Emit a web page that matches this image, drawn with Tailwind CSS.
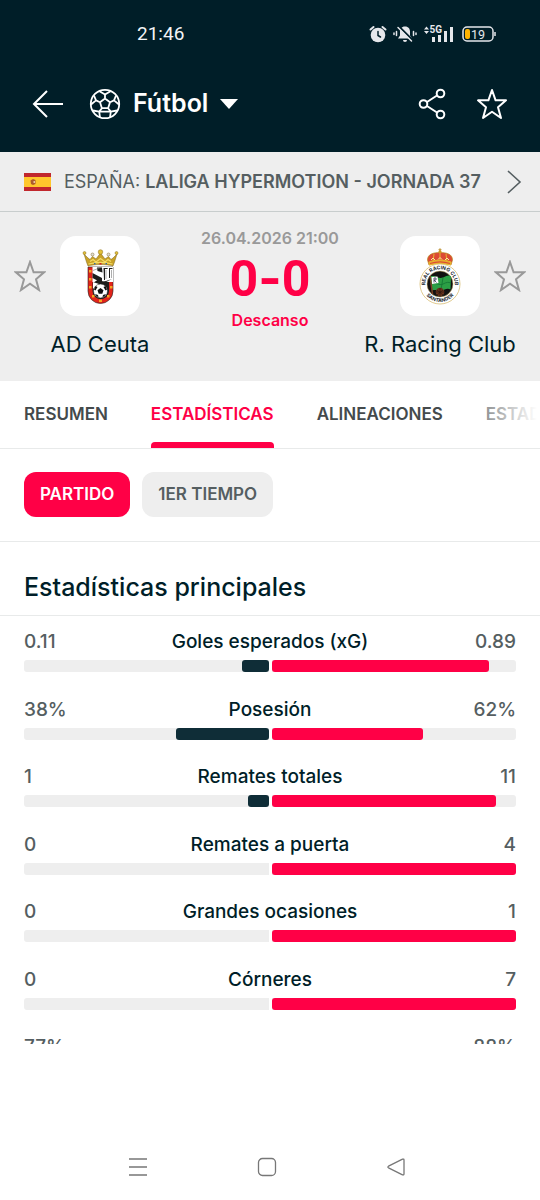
<!DOCTYPE html>
<html lang="es">
<head>
	<meta charset="utf-8">
	<meta name="viewport" content="width=device-width, initial-scale=1">
	<script src="https://cdn.jsdelivr.net/npm/@tailwindcss/browser@4"></script>
	<title>AD Ceuta - R. Racing Club</title>
</head>
<body class="h-screen flex flex-col overflow-hidden bg-white text-[#001e28] font-['Inter',sans-serif]">

	<header class="shrink-0 bg-[#001e28] text-white">
		<!-- Barra de estado -->
		<div class="h-14 pt-3 pl-[137px] pr-11 flex items-center justify-between font-['Roboto',sans-serif]">
			<span class="text-[19px] leading-6 text-gray-100">21:46</span>
			<div class="flex items-center gap-1.5 text-gray-200">
				<svg class="w-[18px] h-[18px]" viewBox="0 0 18 18" fill="none" stroke="currentColor" stroke-width="2" stroke-linecap="round"><circle cx="9" cy="10" r="7.300" fill="currentColor" stroke="none"/><path d="M1.500 4.500 4.500 2M16.500 4.500 13.500 2"/><path d="M9 6.500v4l2.500 1.500" stroke="#001e28" stroke-width="1.500"/></svg>
				<svg class="w-6 h-[18px]" viewBox="0 0 24 18" fill="none" stroke="currentColor" stroke-width="1.500" stroke-linecap="round"><path d="M12 1.500c-3.500 0-5 2.500-5 5v4L5 13.500h14l-2-3v-4c0-2.500-1.500-5-5-5zM10 15h4a2 2 0 0 1-4 0z" fill="currentColor" stroke="none"/><path d="M3.500 6.500v4M1 8v1.500M20.500 6.500v4M23 8v1.500"/><path d="M6 1.500 19.500 15" stroke="#001e28" stroke-width="2"/><path d="M5 2.500 18.500 16"/></svg>
				<svg class="w-[31px] h-[18px]" viewBox="0 0 31 18" fill="currentColor"><path d="M1 4.500 3.500 1.500 6 4.500zM1 6h5L3.500 9z"/><text x="6.500" y="8" font-size="10" font-weight="700">5G</text><rect x="9" y="12" width="3" height="5"/><rect x="15" y="10" width="3" height="7"/><rect x="21" y="6" width="3" height="11"/><rect x="27" y="2" width="3" height="15"/></svg>
				<svg class="ml-0.5 w-[34px] h-4" viewBox="0 0 34 16"><rect x="1" y="1" width="30" height="14" rx="4" fill="none" stroke="currentColor" stroke-width="1.500"/><path d="M33 6v4" stroke="currentColor" stroke-width="1.500"/><rect x="3" y="3" width="5" height="10" rx="2" fill="#ffb400"/><text x="9" y="12.500" font-size="12.500" fill="currentColor">19</text></svg>
			</div>
		</div>
		<!-- Cabecera -->
		<div class="h-24 px-8 flex items-center justify-between">
			<div class="flex items-center">
				<button type="button" aria-label="Volver">
					<svg class="w-8 h-8" viewBox="0 0 32 32" fill="none" stroke="currentColor" stroke-width="2"><path d="M31 16H2M15 3 2 16l13 13"/></svg>
				</button>
				<svg class="ml-6 w-[34px] h-[34px]" viewBox="0 0 34 34" fill="none" stroke="currentColor" stroke-width="1.800" stroke-linejoin="round"><circle cx="17" cy="17" r="14.200"/><path d="m17 11.500 5 3.700-1.900 6h-6.200l-1.900-6zM17 11.500V7.500M22 15.200l4-1.800M20.100 21.200l2.700 3.400M13.900 21.200l-2.700 3.400M12 15.200l-4-1.800M11.500 4.200 17 7.500l5.500-3.300M28 8.500l-2 4.900 5 4.100M29 23.500l-6.200 1.100L22 30.500M12 30.500l-.8-5.900L5 23.500M3 17.500l5-4.100-2-4.900M11.200 24.600h11.600"/></svg>
				<button type="button" class="ml-[11px] flex items-center gap-3 text-[25px] font-semibold">
					Fútbol
					<svg class="w-[18px] h-[10px]" viewBox="0 0 18 10"><path d="M0 0h18L9 10z" fill="currentColor"/></svg>
				</button>
			</div>
			<div class="flex items-center gap-7">
				<button type="button" aria-label="Compartir">
					<svg class="w-8 h-8" viewBox="0 0 32 32" fill="none" stroke="currentColor" stroke-width="2"><circle cx="24.500" cy="5.500" r="3.800"/><circle cx="7.500" cy="16" r="3.800"/><circle cx="24.500" cy="26.500" r="3.800"/><path d="m11 14 10-6.500M11 18l10 6.500"/></svg>
				</button>
				<button type="button" aria-label="Favorito">
					<svg class="w-8 h-8" viewBox="0 0 32 32" fill="none" stroke="currentColor" stroke-width="2" stroke-linejoin="round"><path d="m16 2 3.600 10.300H30l-8 7 3 10.700-9-6.300L7 30l3-10.700-8-7h10.400z"/></svg>
				</button>
			</div>
		</div>
	</header>

	<main class="flex-1 min-h-0 overflow-hidden">
		<a href="#" class="h-[60px] pl-6 pr-[18px] flex items-center bg-[#eeeeee] border-b border-[#c8cdcd] text-[#555e61]">
			<svg class="shrink-0 w-[27px] h-[18px]" viewBox="0 0 27 18"><path fill="#c1272d" d="M0 0h27v18H0z"/><path fill="#ffc72c" d="M0 4h27v10H0z"/><path fill="#ad5a2b" d="M6.500 7.500 9 6l2.500 1v4L9 12 7 11z"/><path fill="#e8c3a3" d="M9.500 8h1.500v2H9.500z"/></svg>
			<span class="ml-[13px] text-lg whitespace-nowrap">ESPAÑA: <b class="font-semibold">LALIGA HYPERMOTION - JORNADA 37</b></span>
			<svg class="ml-auto shrink-0 w-4 h-[26px]" viewBox="0 0 16 26" fill="none" stroke="currentColor" stroke-width="1.600"><path d="m2 2 12 11L2 24"/></svg>
		</a>

		<section class="grid grid-cols-[minmax(0,10fr)_minmax(0,7fr)_minmax(0,10fr)] pb-[23px] bg-[#eeeeee]">
			<div class="pt-6">
				<div class="grid grid-cols-[1fr_80px_1fr] items-center justify-items-center">
					<button type="button" aria-label="Seguir a AD Ceuta" class="text-[#999999]">
						<svg class="w-8 h-8" viewBox="0 0 32 32" fill="none" stroke="currentColor" stroke-width="2"><path d="m16 2 3.600 10.300H30l-8 7 3 10.700-9-6.300L7 30l3-10.700-8-7h10.400z"/></svg>
					</button>
					<div class="w-20 h-20 rounded-2xl bg-white">
						<svg class="w-20 h-20" viewBox="0 0 80 80">
							<path d="M28 31h25v24a12.500 12.500 0 0 1-25 0z" fill="#e2231a" stroke="#222" stroke-width=".6"/>
							<path d="M32.500 31H53v15H32.500z" fill="#fff"/>
							<path d="M32.500 37 42 42v5l-9.500-5zM37 31.500h5l.5 5-5-1.500zM43.500 32h4l.3 1H45v11h-1zM49 32h3.500v1H50v9h-1zM33 47l6-4 4 3 9-3-10 5z" fill="#1d1d1b"/>
							<path d="M33 34.500 42 31M46 34v9M51.500 34v8" stroke="#777" stroke-width=".6"/>
							<path d="M32.500 46.500 40 45l9 1v9a8.200 8.200 0 0 1-16.500 0z" fill="#1d1d1b"/>
							<path d="m33 46 6 2-6 5z" fill="#fff"/>
							<circle cx="40.500" cy="55" r="7" fill="#fff" stroke="#222" stroke-width=".5"/>
							<path d="m40.500 52 3 2.300-1.200 3.500h-3.600l-1.200-3.500zM35.500 50l2 1-2 3.500-1.500-1zM45.500 50l-2 1 2 3.500 1.500-1zM35 58l3 1 .5 2.300-2-1zM46 58l-3 1-.5 2.300 2-1z" fill="#111"/>
							<path d="M29 34h2.500v2.500H29zM29 42h2.500v2.500H29zM29 50h2.500v2.500H29zM32 59h2.500v2.500H32zM39 63.500h3V66h-3zM47 59h2.500v2.500H47zM50 50h2.500v2.500H50z" fill="#f5a623"/>
							<path d="m28 30-1.500-4L24 18l4 4 2 1.500 2.500-3 3.500 2.500 4.500-6 4.500 6 3.500-2.500 2.500 3 2-1.500 4-4-2.500 8-1.500 4c-7-2-18-2-25 0z" fill="#c9a227" stroke="#7c6115" stroke-width=".5"/>
							<path d="M28.500 28c7-2 17-2 24 0M30 25.500l3-2 3 2.500 4.500-3.500 4.500 3.500 3-2.500 3 2" fill="none" stroke="#f4dc67" stroke-width="1.200"/>
							<g fill="#e1bf36" stroke="#8b6d18" stroke-width=".5"><circle cx="24.500" cy="17" r="1.500"/><circle cx="32.500" cy="18.500" r="1.500" fill="#ddd"/><circle cx="40.500" cy="16" r="2.300"/><circle cx="48.500" cy="18.500" r="1.500" fill="#ddd"/><circle cx="56.500" cy="17" r="1.500"/></g>
							<path d="M39.500 27h2v1.500h-2z" fill="#d1232a"/><path d="M34 27h1.500v1.200H34zM45.500 27H47v1.200h-1.500z" fill="#2c6da5"/>
						</svg>
					</div>
				</div>
				<h2 class="mt-3.5 text-center text-[22px] leading-7">AD Ceuta</h2>
			</div>
			<div class="pt-4 flex flex-col items-center whitespace-nowrap">
				<time class="text-base leading-5 font-semibold text-[#999999]">26.04.2026 21:00</time>
				<p class="mt-2.5 text-[50px] leading-10 font-bold text-[#ff0046] font-['Roboto',sans-serif]">0<span class="font-['Inter',sans-serif]">-</span>0</p>
				<p class="mt-[11px] text-base leading-5 font-semibold text-[#ff0046]">Descanso</p>
			</div>
			<div class="pt-6">
				<div class="grid grid-cols-[1fr_80px_1fr] items-center justify-items-center">
					<div class="col-start-2 w-20 h-20 rounded-2xl bg-white">
						<svg class="w-20 h-20" viewBox="0 0 80 80">
							<path d="M29 29 27.500 24c0-6 6-7.500 12.500-7.500S52.500 18 52.500 24L51 29c-7-2-15-2-22 0z" fill="#dc4a35" stroke="#b78b20" stroke-width=".7"/>
							<path d="M29 26c7-2.500 15-2.500 22 0l-.5 3c-7-2-14-2-21 0zM40 17v9M34 18l-1 8M46 18l1 8" fill="#e8b52d" stroke="#e8b52d" stroke-width="1"/>
							<path d="M30 27.500c6-2 14-2 20 0" fill="none" stroke="#dc4a35" stroke-width="1.200"/>
							<path d="m31 24 2-2 2 2M38 23.500l2-2 2 2M45 24l2-2 2 2" fill="none" stroke="#fbe6a0"/>
							<circle cx="40" cy="15.500" r="1.500" fill="#d59b24"/><path d="M40 12v4M38.500 13.500h3" stroke="#b98a22" stroke-width=".7"/>
							<circle cx="40" cy="48" r="20" fill="#fff" stroke="#d8bd72" stroke-width=".8"/>
							<circle cx="40" cy="48" r="13" fill="#111" stroke="#d8bd72" stroke-width=".5"/>
							<path id="arcTop" d="M26.200 53.500a14.800 14.800 0 1 1 27.600 0" fill="none"/>
							<path id="arcBottom" d="M23.200 54a17.800 17.800 0 0 0 33.600 0" fill="none"/>
							<g fill="#1d2a33" font-size="5" font-weight="700" text-anchor="middle"><text><textPath href="#arcTop" startOffset="50%">REAL RACING CLUB</textPath></text><text><textPath href="#arcBottom" startOffset="50%">SANTANDER</textPath></text></g>
							<path d="M30 40.500c6-2 8 3 13 1 4-2 6-3 8-1l-.5 13c-4-2-6 1-9 1s-6-1-9.500 0z" fill="#2c9f45"/>
							<path d="M43 41.500 41 54M30 48c6-2 9 2 13 0s5-2 8-1" fill="none" stroke="#137333" stroke-width=".8"/>
							<path d="m31.500 41 6-.5 1 6.500-6.500 1z" fill="#fff"/><path d="M34 46.500V42h2v2h-2l2.500 2.500" fill="none" stroke="#335" stroke-width=".8"/>
							<path d="m30 40 2.500 18" stroke="#7d3f22" stroke-width="1.500"/>
							<circle cx="40" cy="56" r="4.300" fill="#69331d"/><path d="M36 56h8M40 52v8M37 54l6 5M43 54l-6 5" stroke="#24130b" stroke-width=".6"/>
						</svg>
					</div>
					<button type="button" aria-label="Seguir a R. Racing Club" class="text-[#999999]">
						<svg class="w-8 h-8" viewBox="0 0 32 32" fill="none" stroke="currentColor" stroke-width="2"><path d="m16 2 3.600 10.300H30l-8 7 3 10.700-9-6.300L7 30l3-10.700-8-7h10.400z"/></svg>
					</button>
				</div>
				<h2 class="mt-3.5 text-center text-[22px] leading-7">R. Racing Club</h2>
			</div>
		</section>

		<nav class="relative h-[68px] pl-6 flex gap-[43px] overflow-hidden border-b border-[#e8eaea] text-[17px] font-semibold whitespace-nowrap text-[#444a4c]">
			<a href="#" class="h-[67px] leading-[67px]">RESUMEN</a>
			<a href="#" aria-current="page" class="relative h-[67px] leading-[67px] text-[#ff0046]">ESTADÍSTICAS<span class="absolute inset-x-0 bottom-0 h-1.5 rounded-t bg-[#ff0046]"></span></a>
			<a href="#" class="h-[67px] leading-[67px]">ALINEACIONES</a>
			<a href="#" class="h-[67px] leading-[67px]">ESTADÍSTICAS</a>
			<div class="absolute right-0 inset-y-0 w-16 bg-linear-to-r from-white/30 to-white to-95%"></div>
		</nav>

		<div class="px-6 pt-[23px] pb-6 flex gap-3 border-b border-[#e8eaea] text-[17px] font-semibold">
			<button type="button" class="h-[45px] px-4 rounded-xl bg-[#ff0046] text-white">PARTIDO</button>
			<button type="button" class="h-[45px] px-4 rounded-xl bg-[#eeeeee] text-[#555e61]">1ER TIEMPO</button>
		</div>

		<h3 class="h-[74px] px-6 pt-3.5 text-[25px] leading-[62px] font-medium border-b border-[#e8eaea]">Estadísticas principales</h3>

		<ul id="stats" class="px-6 pt-3"></ul>
	</main>

	<!-- Navegación del sistema -->
	<footer class="shrink-0 h-[156px] pl-[74px] pr-20 pb-[23px] grid grid-cols-3 items-end justify-items-center text-[#777777]">
		<button type="button" aria-label="Recientes"><svg class="w-5 h-5" viewBox="0 0 20 20" fill="none" stroke="currentColor" stroke-width="1.300"><path d="M1 2h18M1 10h18M1 18h18"/></svg></button>
		<button type="button" aria-label="Inicio"><svg class="w-5 h-5" viewBox="0 0 20 20" fill="none" stroke="currentColor" stroke-width="1.300"><rect x="1.500" y="1.500" width="17" height="17" rx="4"/></svg></button>
		<button type="button" aria-label="Atrás"><svg class="w-5 h-5" viewBox="0 0 20 20" fill="none" stroke="currentColor" stroke-width="1.300" stroke-linejoin="round"><path d="M16.500 2.200 2.500 9.200q-1.300.8 0 1.600l14 7q1.500.6 1.500-1v-13.600q0-1.600-1.500-1z"/></svg></button>
	</footer>

	<script>
		// nombre, valor local, valor visitante, % barra local, % barra visitante
		const stats = [
			["Goles esperados (xG)", "0.11", "0.89", 11, 89],
			["Posesión", "38%", "62%", 38, 62],
			["Remates totales", "1", "11", 8.3, 91.7],
			["Remates a puerta", "0", "4", 0, 100],
			["Grandes ocasiones", "0", "1", 0, 100],
			["Córneres", "0", "7", 0, 100],
			["", "77%", "88%", 77, 88],
		];

		document.getElementById("stats").innerHTML = stats.map(([name, home, away, homePct, awayPct]) => `
			<li class="odd:h-[68px] even:h-[67px]">
				<div class="grid grid-cols-[1fr_auto_1fr] text-[19px] leading-7 font-medium">
					<span class="text-[#555e61]">${home}</span>
					<span>${name}</span>
					<span class="text-right text-[#555e61]">${away}</span>
				</div>
				<div class="mt-1 flex gap-[3px]">
					<div class="flex-1 h-3 flex justify-end rounded-l-[3px] bg-[#eeeeee]"><div class="rounded-[3px] bg-[#0f2d37]" style="width: ${homePct}%"></div></div>
					<div class="flex-1 h-3 rounded-r-[3px] bg-[#eeeeee]"><div class="h-3 rounded-[3px] bg-[#ff0046]" style="width: ${awayPct}%"></div></div>
				</div>
			</li>`).join("");
	</script>
</body>
</html>
